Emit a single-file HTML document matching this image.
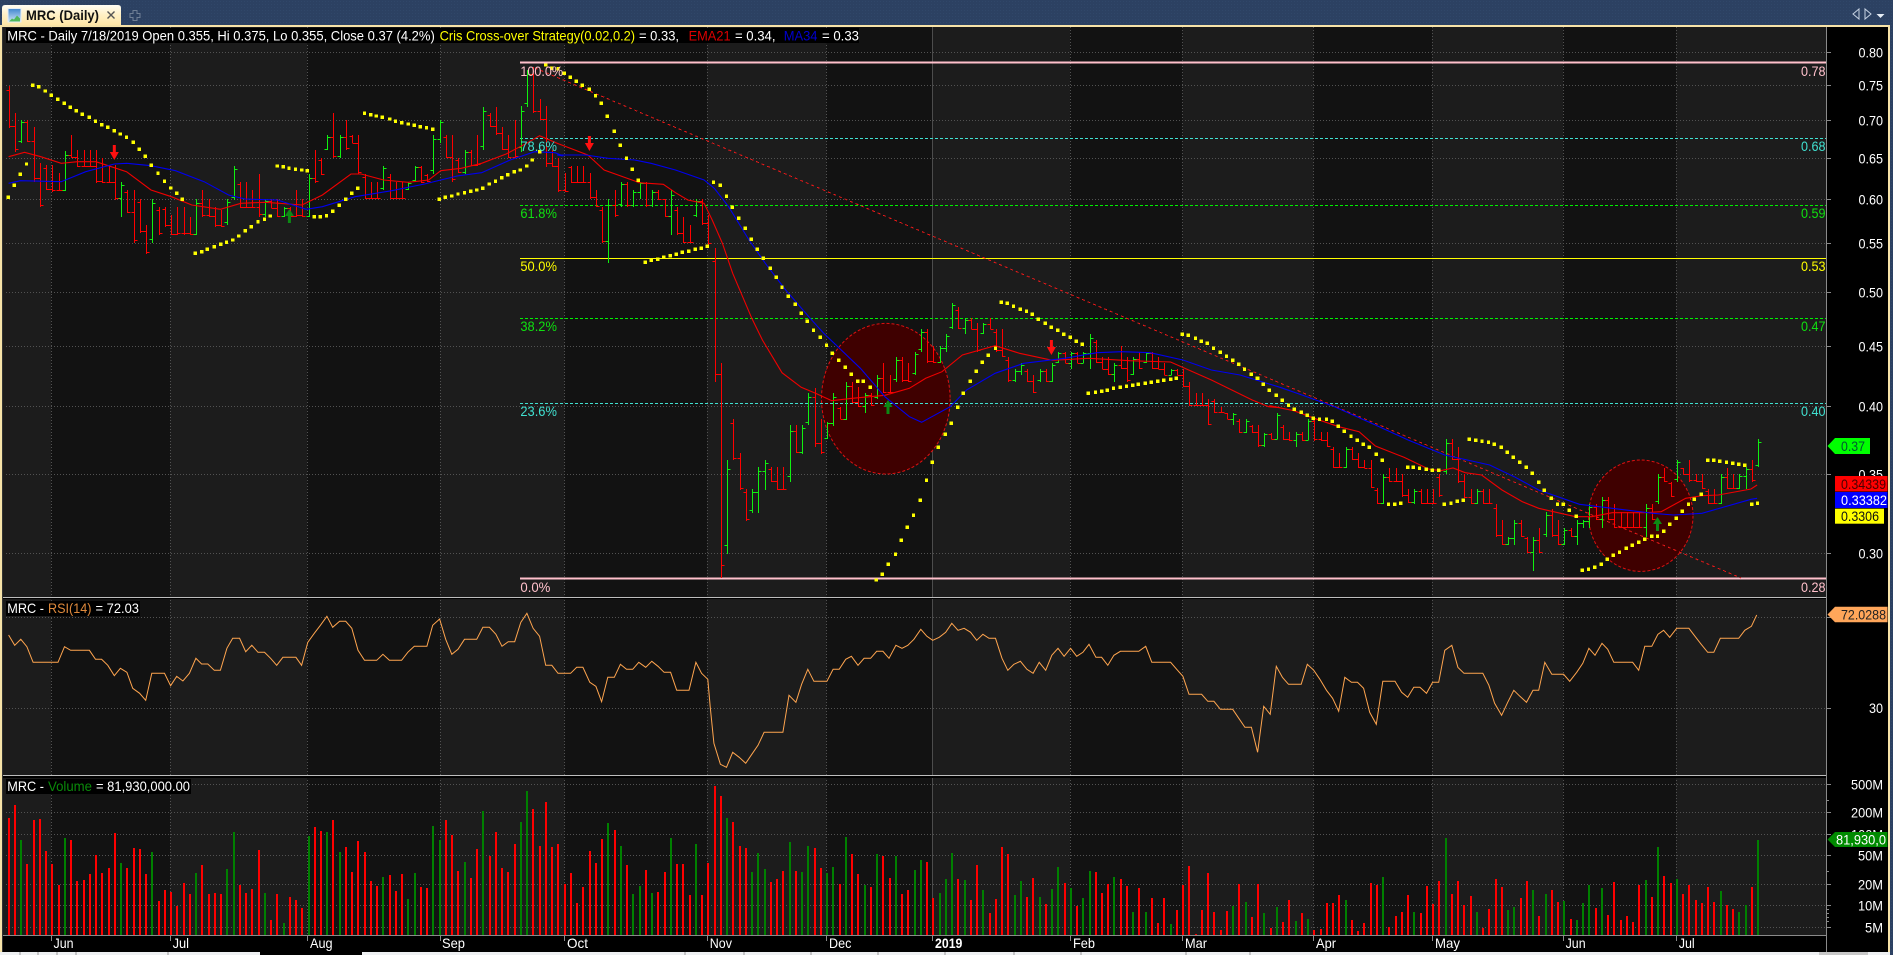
<!DOCTYPE html>
<html><head><meta charset="utf-8"><title>MRC (Daily)</title>
<style>
html,body{margin:0;padding:0;background:#2d4263;width:1893px;height:955px;overflow:hidden}
svg{display:block}
text{font-family:"Liberation Sans",Arial,sans-serif;font-size:14px;fill:#fff}
.c{shape-rendering:crispEdges}
.grid{stroke:#525252;stroke-width:1;stroke-dasharray:1 2;fill:none;shape-rendering:crispEdges}
</style></head><body>
<svg xmlns="http://www.w3.org/2000/svg" width="1893" height="955" viewBox="0 0 1893 955">
<defs>
<pattern id="dn" width="3" height="3" patternUnits="userSpaceOnUse"><rect width="3" height="3" fill="#2c4162"/><rect x="1" y="1" width="1" height="1" fill="#304769"/></pattern>
<linearGradient id="tb" x1="0" y1="0" x2="0" y2="1"><stop offset="0" stop-color="#fffdf4"/><stop offset=".5" stop-color="#fff0c4"/><stop offset="1" stop-color="#ffe7a6"/></linearGradient>
<linearGradient id="ic" x1="0" y1="0" x2="0" y2="1"><stop offset="0" stop-color="#3f86cf"/><stop offset="1" stop-color="#cfe6f7"/></linearGradient>
<clipPath id="pp"><rect x="3" y="27" width="1823.5" height="570"/></clipPath>
</defs>

<!-- window chrome -->
<rect width="1893" height="955" fill="url(#dn)"/>
<rect x="0" y="25" width="1890" height="930" fill="#f7e3a8"/>
<rect x="2" y="27" width="1886" height="925" fill="#000"/>
<rect x="0" y="952" width="1890" height="3" fill="#eef0f2"/>
<rect x="260" y="952" width="102" height="3" fill="#000"/>
<rect x="1819" y="952" width="49" height="3" fill="#c8c8c8"/>
<path class="c" d="M20 952v3M38 952v3M57 952v3M76 952v3M168 952v3M685 952v3M744 952v3M811 952v3M878 952v3M945 952v3M1014 952v3M1081 952v3M1186 952v3M1250 952v3" stroke="#999"/>

<!-- tab -->
<path d="M2 25V8q0-3 3-3H118q3 0 3 3V25z" fill="url(#tb)"/>
<rect x="8" y="8.5" width="13" height="13.5" fill="url(#ic)" stroke="#e4eef7"/>
<path d="M9 21.500l3-3 2 1 3-4 3 3v3H9z" fill="#4fb85a"/>
<text x="26" y="20" textLength="73" lengthAdjust="spacingAndGlyphs" style="font-weight:bold;fill:#111">MRC (Daily)</text>
<path d="M107.500 11.500l7 7M114.500 11.500l-7 7" stroke="#555" stroke-width="1.400"/>
<path d="M133 10.500h4v3h3v4h-3v3h-4v-3h-3v-4h3z" fill="none" stroke="#6f7f95"/>
<path d="M1859 9v10l-6-5zM1865 9v10l6-5z" fill="#2d4263" stroke="#c6d2e2"/>
<path d="M1876.500 14h8l-4 4z" fill="#e6edf5"/>

<!-- plot bands -->
<g class="c">
<rect x="3" y="27" width="48" height="908" fill="#1c1c1c"/>
<rect x="51" y="27" width="119" height="908" fill="#121212"/>
<rect x="170" y="27" width="137" height="908" fill="#1c1c1c"/>
<rect x="307" y="27" width="133" height="908" fill="#121212"/>
<rect x="440" y="27" width="124.500" height="908" fill="#1c1c1c"/>
<rect x="564.500" y="27" width="142.500" height="908" fill="#121212"/>
<rect x="707" y="27" width="119.500" height="908" fill="#1c1c1c"/>
<rect x="826.500" y="27" width="105.500" height="908" fill="#121212"/>
<rect x="932" y="27" width="138" height="908" fill="#1c1c1c"/>
<rect x="1070" y="27" width="112.400" height="908" fill="#121212"/>
<rect x="1182.400" y="27" width="131" height="908" fill="#1c1c1c"/>
<rect x="1313.400" y="27" width="118.600" height="908" fill="#121212"/>
<rect x="1432" y="27" width="131" height="908" fill="#1c1c1c"/>
<rect x="1563" y="27" width="113" height="908" fill="#121212"/>
<rect x="1676" y="27" width="150.500" height="908" fill="#1c1c1c"/>
</g>

<!-- grid -->
<path class="grid" d="M51.500 27V940M170.500 27V940M307.500 27V940M440.500 27V940M564.500 27V940M707.500 27V940M826.500 27V940M1070.500 27V940M1182.500 27V940M1313.500 27V940M1432.500 27V940M1563.500 27V940M1676.500 27V940"/>
<path class="c" d="M932.500 27V940" stroke="#4c4c4c" fill="none"/>
<path class="grid" d="M6 52.500H1826M6 85.500H1826M6 120.500H1826M6 158.500H1826M6 199.500H1826M6 243.500H1826M6 292.500H1826M6 346.500H1826M6 406.500H1826M6 474.500H1826M6 553.500H1826M6 617.500H1826M6 708.500H1826M6 784.500H1826M6 812.500H1826M6 834.500H1826M6 855.500H1826M6 884.500H1826M6 905.500H1826M6 927.500H1826"/>

<!-- circles -->
<ellipse cx="885.800" cy="398.700" rx="64.300" ry="75.300" fill="#3f0000" stroke="#e01010" stroke-dasharray="3 2"/>
<ellipse cx="1640.800" cy="515.700" rx="52.200" ry="55.700" fill="#3f0000" stroke="#e01010" stroke-dasharray="3 2"/>

<!-- fibonacci -->
<g class="c" fill="none">
<path d="M520 62.700H1826.500M520 578.700H1826.500" stroke="#ffc0cb" stroke-width="2"/>
<path d="M520 138.500H1826.500M520 403.500H1826.500" stroke="#40e0d0" stroke-dasharray="3 2"/>
<path d="M520 205.500H1826.500M520 318.500H1826.500" stroke="#00f000" stroke-dasharray="3 2"/>
<path d="M520 258.500H1826.500" stroke="#ffff00"/>
</g>
<path d="M535 68L1741 578" stroke="#e81818" stroke-dasharray="3 3" fill="none" class="c"/>

<!-- price bars / averages / SAR -->
<g clip-path="url(#pp)">
<path id="prR" class="c" stroke="#ff0000" fill="none"/>
<path id="prG" class="c" stroke="#10f010" fill="none"/>
<path id="ema" stroke="#f00000" stroke-width="1.100" fill="none"/>
<path id="ma" stroke="#0000f0" stroke-width="1.100" fill="none"/>
<path id="sar" class="c" fill="#ffff00"/>
</g>
<!-- arrows -->
<path d="M112.800 145h3v7h3l-4.500 8-4.500-8h3zM587.900 136h3v7h3l-4.500 8-4.500-8h3zM1049.900 340h3v7h3l-4.500 8-4.500-8h3z" fill="#ff1010"/>
<path d="M287.900 223h3v-7h3l-4.500-7-4.500 7h3zM886.500 414h3v-7h3l-4.500-7-4.500 7h3zM1656 531h3v-7h3l-4.500-7-4.500 7h3z" fill="#0c8a14"/>

<!-- RSI + volume -->
<path id="rsi" stroke="#ffa54f" stroke-width="1" fill="none"/>
<path id="vR" class="c" stroke="#ff0000" stroke-width="2" fill="none"/>
<path id="vG" class="c" stroke="#008000" stroke-width="2" fill="none"/>

<!-- separators -->
<g class="c">
<rect x="3" y="597" width="1823.500" height="1" fill="#bdbdbd"/><rect x="3" y="598" width="1823.500" height="1" fill="#000"/>
<rect x="3" y="775" width="1823.500" height="1" fill="#bdbdbd"/><rect x="3" y="776" width="1823.500" height="2" fill="#000"/>
<rect x="2" y="935" width="1825" height="17" fill="#000"/>
<rect x="3" y="935" width="1824" height="1" fill="#8a8a8a"/>
<rect x="1827" y="27" width="61" height="925" fill="#000"/>
<rect x="1826" y="27" width="1" height="925" fill="#8a8a8a"/>
<rect x="2" y="27" width="1" height="925" fill="#333"/>
<path d="M1827 52.500h4M1827 85.500h4M1827 120.500h4M1827 158.500h4M1827 199.500h4M1827 243.500h4M1827 292.500h4M1827 346.500h4M1827 406.500h4M1827 474.500h4M1827 553.500h4M1827 617.500h4M1827 708.500h4M1827 784.500h4M1827 812.500h4M1827 834.500h4M1827 855.500h4M1827 884.500h4M1827 905.500h4M1827 927.500h4M1827 800.500h2M1827 871.500h2M1827 909.500h2M1827 913.500h2M1827 917.500h2M1827 921.500h2" stroke="#8a8a8a"/>
<path d="M51.500 935v6M170.500 935v6M307.500 935v6M440.500 935v6M564.500 935v6M707.500 935v6M826.500 935v6M932.500 935v6M1070.500 935v6M1182.500 935v6M1313.500 935v6M1432.500 935v6M1563.500 935v6M1676.500 935v6" stroke="#8a8a8a"/>
</g>

<!-- legends -->
<rect x="6" y="28" width="853" height="15" fill="#000"/>
<rect x="6" y="601" width="134" height="15" fill="#000"/>
<rect x="6" y="779" width="185" height="15" fill="#000"/>
<text x="7.300" y="40.500" textLength="427.500" lengthAdjust="spacingAndGlyphs">MRC - Daily 7/18/2019 Open 0.355, Hi 0.375, Lo 0.355, Close 0.37 (4.2%)</text>
<text x="439.600" y="40.500" textLength="195.500" lengthAdjust="spacingAndGlyphs" style="fill:#ffff00">Cris Cross-over Strategy(0.02,0.2)</text>
<text x="639" y="40.500" textLength="40" lengthAdjust="spacingAndGlyphs">= 0.33,</text>
<text x="688.600" y="40.500" textLength="42" lengthAdjust="spacingAndGlyphs" style="fill:#e00000">EMA21</text>
<text x="735" y="40.500" textLength="40.500" lengthAdjust="spacingAndGlyphs">= 0.34,</text>
<text x="783.700" y="40.500" textLength="33.800" lengthAdjust="spacingAndGlyphs" style="fill:#0000d0">MA34</text>
<text x="822" y="40.500" textLength="37" lengthAdjust="spacingAndGlyphs">= 0.33</text>

<text x="7.300" y="613" textLength="36.700" lengthAdjust="spacingAndGlyphs">MRC -</text>
<text x="48" y="613" textLength="43.400" lengthAdjust="spacingAndGlyphs" style="fill:#e08a3c">RSI(14)</text>
<text x="95.500" y="613" textLength="43.500" lengthAdjust="spacingAndGlyphs">= 72.03</text>
<text x="7.300" y="791" textLength="36.700" lengthAdjust="spacingAndGlyphs">MRC -</text>
<text x="48" y="791" textLength="44" lengthAdjust="spacingAndGlyphs" style="fill:#0a8a0a">Volume</text>
<text x="96" y="791" textLength="94" lengthAdjust="spacingAndGlyphs">= 81,930,000.00</text>

<!-- fib labels -->
<text x="520.400" y="76" textLength="42.600" lengthAdjust="spacingAndGlyphs" style="fill:#ffc0cb">100.0%</text>
<text x="520.400" y="592" textLength="30" lengthAdjust="spacingAndGlyphs" style="fill:#ffc0cb">0.0%</text>
<text x="1801" y="76" textLength="24.500" lengthAdjust="spacingAndGlyphs" style="fill:#ffc0cb">0.78</text>
<text x="1801" y="592" textLength="24.500" lengthAdjust="spacingAndGlyphs" style="fill:#ffc0cb">0.28</text>
<text x="520.400" y="151" textLength="36.500" lengthAdjust="spacingAndGlyphs" style="fill:#40e0d0">78.6%</text>
<text x="520.400" y="416" textLength="36.500" lengthAdjust="spacingAndGlyphs" style="fill:#40e0d0">23.6%</text>
<text x="520.400" y="218" textLength="36.500" lengthAdjust="spacingAndGlyphs" style="fill:#10e010">61.8%</text>
<text x="520.400" y="331" textLength="36.500" lengthAdjust="spacingAndGlyphs" style="fill:#10e010">38.2%</text>
<text x="520.400" y="271" textLength="36.500" lengthAdjust="spacingAndGlyphs" style="fill:#ffff00">50.0%</text>
<text x="1801" y="151" textLength="24.500" lengthAdjust="spacingAndGlyphs" style="fill:#40e0d0">0.68</text>
<text x="1801" y="416" textLength="24.500" lengthAdjust="spacingAndGlyphs" style="fill:#40e0d0">0.40</text>
<text x="1801" y="218" textLength="24.500" lengthAdjust="spacingAndGlyphs" style="fill:#10e010">0.59</text>
<text x="1801" y="331" textLength="24.500" lengthAdjust="spacingAndGlyphs" style="fill:#10e010">0.47</text>
<text x="1801" y="271" textLength="24.500" lengthAdjust="spacingAndGlyphs" style="fill:#ffff00">0.53</text>

<!-- y axis labels -->
<g>
<text x="1858.500" y="57.500" textLength="24.500" lengthAdjust="spacingAndGlyphs">0.80</text>
<text x="1858.500" y="90.500" textLength="24.500" lengthAdjust="spacingAndGlyphs">0.75</text>
<text x="1858.500" y="125.500" textLength="24.500" lengthAdjust="spacingAndGlyphs">0.70</text>
<text x="1858.500" y="163.500" textLength="24.500" lengthAdjust="spacingAndGlyphs">0.65</text>
<text x="1858.500" y="204.500" textLength="24.500" lengthAdjust="spacingAndGlyphs">0.60</text>
<text x="1858.500" y="248.500" textLength="24.500" lengthAdjust="spacingAndGlyphs">0.55</text>
<text x="1858.500" y="297.500" textLength="24.500" lengthAdjust="spacingAndGlyphs">0.50</text>
<text x="1858.500" y="351.500" textLength="24.500" lengthAdjust="spacingAndGlyphs">0.45</text>
<text x="1858.500" y="411.500" textLength="24.500" lengthAdjust="spacingAndGlyphs">0.40</text>
<text x="1858.500" y="479.500" textLength="24.500" lengthAdjust="spacingAndGlyphs">0.35</text>
<text x="1858.500" y="558.500" textLength="24.500" lengthAdjust="spacingAndGlyphs">0.30</text>
<text x="1869" y="713" textLength="14" lengthAdjust="spacingAndGlyphs">30</text>
<text x="1851" y="789.500" textLength="32" lengthAdjust="spacingAndGlyphs">500M</text>
<text x="1851" y="817.500" textLength="32" lengthAdjust="spacingAndGlyphs">200M</text>
<text x="1851" y="839.500" textLength="32" lengthAdjust="spacingAndGlyphs">100M</text>
<text x="1858" y="860.500" textLength="25" lengthAdjust="spacingAndGlyphs">50M</text>
<text x="1858" y="889.500" textLength="25" lengthAdjust="spacingAndGlyphs">20M</text>
<text x="1858" y="910.500" textLength="25" lengthAdjust="spacingAndGlyphs">10M</text>
<text x="1865" y="932.500" textLength="18" lengthAdjust="spacingAndGlyphs">5M</text>
</g>

<!-- tags -->
<polygon points="1827.500,446 1835,438 1870,438 1870,454 1835,454" fill="#00ff00"/>
<text x="1841" y="451" textLength="24" lengthAdjust="spacingAndGlyphs" style="fill:#053">0.37</text>
<rect x="1835" y="476" width="52.500" height="15.500" fill="#ff0000"/>
<text x="1841" y="489" textLength="45" lengthAdjust="spacingAndGlyphs" style="fill:#4a0000">0.34339</text>
<rect x="1835" y="492" width="52.500" height="16" fill="#0000ff"/>
<text x="1841" y="505" textLength="46" lengthAdjust="spacingAndGlyphs">0.33382</text>
<rect x="1835" y="508.700" width="49" height="15" fill="#ffff00"/>
<text x="1841" y="521" textLength="38" lengthAdjust="spacingAndGlyphs" style="fill:#111">0.3306</text>
<polygon points="1827.500,614.500 1835,606.700 1887.500,606.700 1887.500,622.300 1835,622.300" fill="#ffa65a"/>
<text x="1841" y="619.500" textLength="45" lengthAdjust="spacingAndGlyphs" style="fill:#222">72.0288</text>
<polygon points="1827.500,839.500 1835,832 1887.500,832 1887.500,847 1835,847" fill="#008a00"/>
<text x="1836" y="844.500" textLength="50" lengthAdjust="spacingAndGlyphs">81,930,0</text>

<!-- x axis labels -->
<g>
<text x="53.500" y="948" textLength="20" lengthAdjust="spacingAndGlyphs">Jun</text>
<text x="172.600" y="948" textLength="16.400" lengthAdjust="spacingAndGlyphs">Jul</text>
<text x="310" y="948" textLength="22.600" lengthAdjust="spacingAndGlyphs">Aug</text>
<text x="442" y="948" textLength="23" lengthAdjust="spacingAndGlyphs">Sep</text>
<text x="567" y="948" textLength="21" lengthAdjust="spacingAndGlyphs">Oct</text>
<text x="709.800" y="948" textLength="22.200" lengthAdjust="spacingAndGlyphs">Nov</text>
<text x="829" y="948" textLength="22.400" lengthAdjust="spacingAndGlyphs">Dec</text>
<text x="935" y="948" textLength="27.400" lengthAdjust="spacingAndGlyphs" style="font-weight:bold">2019</text>
<text x="1073" y="948" textLength="22" lengthAdjust="spacingAndGlyphs">Feb</text>
<text x="1185" y="948" textLength="22" lengthAdjust="spacingAndGlyphs">Mar</text>
<text x="1316" y="948" textLength="20" lengthAdjust="spacingAndGlyphs">Apr</text>
<text x="1435" y="948" textLength="25" lengthAdjust="spacingAndGlyphs">May</text>
<text x="1565.600" y="948" textLength="20" lengthAdjust="spacingAndGlyphs">Jun</text>
<text x="1678.700" y="948" textLength="16" lengthAdjust="spacingAndGlyphs">Jul</text>
</g>
</svg>

<script>
function pts(x0,y0,s){return s.trim().split(/\s+/).map(function(p){var a=p.split(',');return [x0+a[0]/2.45,y0+a[1]/3];});}
function line(a){return 'M'+a.map(function(p){return p[0].toFixed(1)+' '+p[1].toFixed(1);}).join('L');}
function set(id,d){document.getElementById(id).setAttribute('d',d);}
var S=6.248,X0=8.6;

/* volume */
var vr='',vg='';
function vol(start,s){s.trim().split(/\s+/).forEach(function(t,i){var g=/g/.test(t),v=590+parseFloat(t)/3,x=Math.round(X0+S*(start+i));var d='M'+x+' '+v.toFixed(1)+'V935';if(g)vg+=d;else vr+=d;});}
vol(0,"684 645 750g 822 690 687 783 822 885 744g 750 873 870 852 795 849 834 729 819g 834 774 777 852 786g 933 900 906 948 879 912 849g 825 912 909 912 837g 726g 885 909 897 780 909g 990 912 999g 921 930 954 738g 711 723 726g 690 786g 771 846 753 786 873 888 861g 855 903 852 927g 849g 891 894 708g 750g 690 735 843 816g 864 777 663g 798 726 834 846 762 696g 603g 657 768 636 771 762 882 849 939 891 783 819 747 699g 720 768g 825 912g 888g");
vol(102,"840 909g 906 846 744g 822 822 915 762g 915 819 588 618 684g 696 768 774 846g 789g 837g 876 867 843 756g 843 846g 768g 774 834 849g 831g 882 741g 792 852 885g 891 792g 798 864 798g 912 900 840g 810g 816 924 909g 867g 789g 867 870g 930 825 900g 969 927 771 792 915g 873g 921 864 921g 942 897g 831g 879 894g 948 924g 843g 846 909 882 861g 867 888 966g 894 966g 924 999 924 1002g 960 885 828 1032 960 849 966 1020 963 948g 882 936g 981 882 969g 1014 951g");
vol(204,"996 930 993g 969 987g 1020 1017 939 939 915 930g 990 1023 999 879 885 861g 1011 978 966 915 966g 969 888 942 873 744g 912 873 945 918 966g 1014 957 867 891 960g 951g 924 873 900g 978 912g 900 936 933g 987 990g 939g 885g 954 894g 975 876 990 978 996 885 870g 921 771g 858 879 867g 912 885 930 939 891 936 903g 945 957 966g 945g 891 750g");
set('vR',vr);set('vG',vg);

/* price bars: open continues from previous close when in range, giving the stair look */
var pr='',pg='',prev=null;
function bars(start,y0,s){s.trim().split(/\s+/).forEach(function(t,i){var g=/g/.test(t),a=t.replace('g','').split(','),h=y0+a[0]/3,l=y0+a[1]/3,d=l-h,x=Math.round(X0+S*(start+i))+0.5;
var o=(prev!==null&&prev>=h&&prev<=l)?prev:(g?l-d*.1:h+d*.1),c=g?h+d*.1:l-d*.06;
o=Math.round(o);c=Math.round(c);
var r='M'+x+' '+h.toFixed(0)+'V'+l.toFixed(0)+'M'+(x-3)+' '+o+'.5H'+x+'M'+x+' '+c+'.5H'+(x+3);
if(g)pg+=r;else pr+=r;prev=c;});}
bars(0,0,"258,385 340,455 360,430g 360,427 380,545 490,622 495,570 495,575 520,572 452,572g 405,475 450,500 450,500 450,500 450,550 475,550 495,550 495,600 545,650g 570,640 570,730 597,700 675,762 597,730g 620,705 620,680 645,705 620,705 620,705 650,705 597,705g 570,650 597,650 620,680 630,680 597,675g 497,600g 545,625 545,625 570,625 522,650 597,650g 597,625 597,650 620,650g 620,650 570,650 597,650 522,650g 450,550 475,525 405,450g 340,475 405,475g 360,450 405,430 405,522 522,597 545,597 545,597 497,570g 522,597 545,597 545,597 545,570g 497,545g 497,550 522,545 405,522g 360,430g 405,475 405,545 475,520 450,522g 450,497 405,497 320,450g 340,380 320,405 380,450 405,475 360,475 318,455g 210,320g 200,340 296,360 318,500 450,500 475,575 520,575 497,548 497,548 497,550 520,597 570,620 620,730 597,790g 570,650 545,620g 545,620 570,620g 545,597g 545,620 570,620g 570,600 597,650 570,705g 620,705 650,730 675,730 597,650g 597,675 645,735");
bars(113,300,"-156,245 190,835 480,762g 358,480 460,570 568,662 568,638g 500,638g 480,570g 502,545 502,570 502,570 376,545g 376,460 376,462g 280,376g 265,440 358,462 365,418g 280,378g 320,358 245,360g 245,310 262,320 280,338g 280,318 226,298g 190,280 226,280 172,245g 172,245 190,245 155,226g 88,155g 88,190 138,190 138,190g 102,155g 8,88g 22,88 55,102g 55,88 70,155 70,102g 55,88 88,155 88,172 172,245 208,245g 190,226g 208,245 226,280 208,245g 208,245 190,245g 155,190g 155,190 155,208g 155,190 155,190g 102,208g 120,190 172,208 172,226 190,245g 138,208 172,245 172,226g 155,208 155,190g 155,208 172,208 190,226 208,226g 208,226 208,262 245,318 280,318 280,318 298,376 298,338 320,338 338,358 338,376g 358,398 358,398g 376,398 376,440 398,440g 398,418 338,418g");
bars(204,320,"315,360 337,362 337,380g 337,362 298,360g 298,362 337,362 337,380 380,445 400,445 380,445g 380,420 400,445 420,445 420,505 505,553 463,553g 443,485 443,485 463,530 508,550 508,553g 508,553 508,553 508,553 463,530 358,463g 358,420 380,490 463,535 508,553 508,553g 508,553 508,553 553,650 600,675 650,675g 600,675g 600,650 650,700 650,752g 625,700 577,650g 568,650 600,675 625,675g 625,650 600,675g 600,625g 553,625g 553,600 530,625g 530,600 553,625 577,625 577,625 577,625 577,625 553,650g 553,600 463,553g 443,485 485,530 420,485g 443,463 420,485 463,485 463,508 508,553 508,553 463,553g 443,508 463,508 463,508g 440,508g 420,485 358,442g");
set('prR',pr);set('prG',pg);

/* EMA21 */
var e=[].concat(
pts(0,0,"21,470 60,457 100,470 150,490 190,485 235,485 265,497 310,515 370,570 420,590 470,615 540,628 590,610 650,607 740,615 790,585 860,522 885,522 940,540 1000,547 1050,540 1080,512 1130,505 1180,490 1240,462 1290,430 1322,407 1365,430 1440,465 1480,510 1560,545"),
pts(500,0,"340,548 400,553 430,578 460,600 500,610 520,660 545,730 570,820 617,955"),
pts(640,300,"300,120 348,218 395,262 430,280 470,302 520,295 600,286 660,265 700,235 740,215 790,165 870,137 930,160 1010,181 1100,175 1200,182 1300,186 1400,240 1500,300 1540,320 1568,323"),
pts(1253,320,"40,257 100,272 150,295 210,320 260,335 300,378 370,412 430,447 460,452 490,444 520,458 560,465 610,510 660,545 700,565 790,590 830,590 880,578 960,578 1000,575 1060,535 1100,527 1140,525 1220,507 1235,495"));
set('ema',line(e));

/* MA34 */
var m=[].concat(
pts(0,0,"21,550 50,542 150,545 210,515 280,492 310,490 370,497 430,512 500,545 560,585 600,597 680,600 750,628 790,620 870,590 960,572 1040,552 1120,528 1180,518 1250,480 1310,455 1360,458 1380,468"),
pts(500,0,"140,465 210,465 265,475 330,480 370,490 430,510 500,540 525,565 560,620 610,720 650,790 700,870 760,955"),
pts(640,300,"450,100 540,205 600,290 660,350 690,367 760,320 800,270 870,220 940,190 1040,175 1120,158 1180,155 1250,158 1330,180 1400,210 1470,225 1568,262"),
pts(1253,320,"120,225 200,260 300,315 380,360 470,405 580,435 640,470 700,510 800,553 880,565 980,580 1030,585 1100,580 1220,538 1235,535"));
set('ma',line(m));

/* Parabolic SAR */
var dots=[].concat(
pts(0,0,"20,592 35,556 50,523 65,492 80,256 95,260 111,273 126,286 141,298 157,310 172,322 187,332 202,343 219,352 234,364 249,374 264,382 280,392 295,402 310,412 326,427 341,448 356,469 371,496 387,520 403,544 418,564 433,580 447,598 478,760 494,755 508,748 525,740 541,733 555,727 570,720 585,708 601,692 616,680 632,665 648,658 662,648 679,498 694,500 708,505 724,508 739,510 753,512 770,650 785,650 800,647 815,634 831,616 847,598 862,580 876,565 893,340 908,344 922,348 937,352 955,357 969,364 984,368 1000,372 1015,376 1030,380 1045,383 1060,388 1076,598 1091,592 1107,588 1122,582 1138,578 1153,574 1168,570 1183,565 1199,552 1214,544 1229,533 1244,524 1260,515 1275,510 1291,498 1304,480 1322,455"),
pts(500,0,"112,195 127,205 142,206 157,220 172,232 187,244 202,256 219,268 234,287 248,310 263,349 280,394 295,436 310,475 324,508 339,541 356,787 371,781 386,778 401,771 417,767 432,763 447,757 462,754 478,748 493,745 508,739 523,547 540,556 555,589 569,622 585,655 601,685 616,718 630,748 645,775 662,805 677,832 691,862 706,889 723,913 738,940"),
pts(640,300,"380,13 395,40 410,64 425,91 442,112 457,136 471,160 487,181 503,202 518,223 533,244 547,244 564,262 579,840 594,823 608,793 626,763 640,721 655,682 670,646 687,601 702,541 716,487 731,442 748,403 763,370 778,322 792,280 809,244 824,214 839,187 853,166 871,145 885,7 900,10 915,19 932,28 947,34 961,43 976,58 993,70 1008,82 1023,91 1038,103 1054,112 1069,124 1084,133 1098,280 1116,277 1131,274 1145,271 1160,265 1177,262 1192,259 1207,256 1221,253 1238,250 1253,247 1268,244 1283,241 1300,238 1314,235 1329,103 1343,106 1361,115 1375,124 1390,130 1405,145 1422,157 1437,169 1452,181 1467,193 1481,208 1498,223 1513,235 1527,253 1542,271 1559,286"),
pts(1253,320,"10,175 25,193 40,211 57,226 72,241 87,256 101,268 118,277 133,286 148,295 163,298 180,298 194,304 209,319 224,334 240,349 255,361 270,373 285,382 302,403 317,421 332,553 347,553 362,550 379,442 393,442 408,445 424,448 439,451 455,451 469,553 485,550 500,544 515,541 530,358 546,361 561,364 577,367 591,373 608,382 623,397 638,412 654,427 669,442 684,460 700,487 714,511 731,535 746,553 760,553 775,571 792,589 807,751 822,748 837,742 853,733 868,718 883,706 898,697 914,685 929,676 945,667 960,658 977,649 991,649 1006,634 1021,613 1037,595 1052,574 1067,553 1081,538 1098,523 1114,421 1129,421 1144,424 1160,427 1175,430 1190,433 1205,436 1222,553 1236,550"));
set('sar',dots.map(function(p){return 'M'+(p[0]-1.7).toFixed(1)+' '+(p[1]-1.7).toFixed(1)+'h3.4v3.4h-3.4z';}).join(''));

/* RSI */
var r=[].concat(
pts(0,590,"21,135 36,166 51,148 66,170 81,217 97,217 112,217 127,217 142,217 158,170 173,181 188,181 203,181 219,181 234,208 249,208 264,226 280,257 295,235 311,247 325,295 342,310 357,331 372,250 387,250 403,250 418,287 433,259 448,273 464,250 480,205 494,222 509,222 525,241 540,241 556,175 570,145 587,145 602,185 617,166 632,187 648,187 663,205 678,226 693,202 710,202 725,202 739,226 754,157 770,130 785,106 801,79 815,112 832,94 847,94 862,115 877,181 893,211 908,211 923,211 938,193 954,211 969,211 984,211 999,187 1015,169 1031,169 1046,169 1060,106 1077,87 1092,148 1107,193 1122,178 1138,148 1153,148 1168,148 1183,112 1199,112 1215,133 1230,169 1245,155 1261,155 1276,97 1291,70 1306,115 1322,139 1337,226 1352,226 1367,250 1383,250 1398,250 1413,232 1428,232 1445,277 1460,289 1474,335 1489,262 1505,262 1520,223 1535,238 1550,238 1565,217"),
pts(640,590,"14,232 29,214 44,229 59,247 75,247 90,301 105,301 120,301 137,217 151,250 166,268 172,350 181,460 197,523 212,532 227,487 243,502 259,520 274,493 289,466 304,427 320,427 335,427 350,427 365,316 382,337 396,283 411,238 426,274 443,274 458,274 473,238 488,238 504,208 518,199 534,226 549,205 565,205 580,184 595,184 610,205 627,166 642,175 656,166 671,148 688,118 703,139 717,151 733,142 749,127 764,100 779,121 794,115 810,127 825,151 840,133 855,145 871,145 887,205 901,241 916,223 932,214 948,238 963,250 978,217 994,241 1009,196 1024,175 1039,199 1055,175 1070,199 1085,187 1100,163 1117,202 1131,202 1146,226 1161,196 1177,184 1192,184 1207,184 1222,184 1239,169 1254,217 1269,217 1284,217 1300,217 1315,238 1330,259 1345,313 1361,313 1376,313 1391,334 1406,334 1422,358 1437,358 1452,358 1467,385 1482,412 1498,412 1513,487 1528,349 1544,373 1559,229"),
pts(1253,590,"72,262 87,283 102,283 118,283 133,223 149,241 164,268 180,301 195,325 210,364 225,262 241,277 256,277 271,295 286,367 302,403 318,274 333,274 348,274 364,307 379,322 394,292 409,292 425,310 440,277 455,277 470,181 487,166 502,232 517,250 532,250 548,250 563,250 578,286 592,340 609,376 624,337 639,301 654,319 670,337 686,301 700,301 715,217 732,253 747,253 761,253 776,274 793,247 808,220 823,175 838,196 855,160 869,178 884,217 899,217 915,217 930,217 945,241 960,169 977,169 992,133 1006,121 1021,142 1038,115 1053,115 1068,115 1083,139 1098,163 1114,187 1129,187 1145,145 1160,145 1176,145 1190,145 1205,121 1221,109 1234,75"));
set('rsi',line(r));
</script>
</body></html>
